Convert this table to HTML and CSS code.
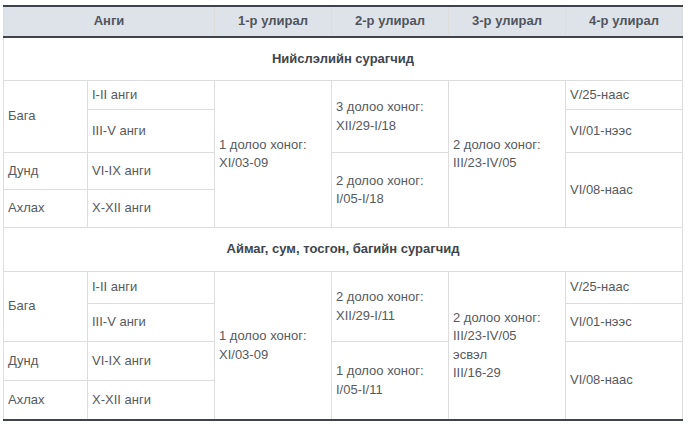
FILE: index.html
```html
<!DOCTYPE html>
<html>
<head>
<meta charset="utf-8">
<link rel="stylesheet" href="styles.css">
</head>
<body>
<table class="sched">
  <colgroup>
    <col class="c-level">
    <col class="c-grade">
    <col class="c-q">
    <col class="c-q">
    <col class="c-q">
    <col class="c-q">
  </colgroup>
  <thead>
    <tr class="head">
      <th colspan="2">Анги</th>
      <th>1-р улирал</th>
      <th>2-р улирал</th>
      <th>3-р улирал</th>
      <th>4-р улирал</th>
    </tr>
  </thead>
  <tbody>
    <tr class="sect"><td colspan="6">Нийслэлийн сурагчид</td></tr>
    <tr class="a1">
      <td rowspan="2" class="lv">Бага</td>
      <td class="gr">I-II анги</td>
      <td rowspan="4" class="q1">1 долоо хоног:<br>XI/03-09</td>
      <td rowspan="2" class="q2">3 долоо хоног:<br>XII/29-I/18</td>
      <td rowspan="4" class="q3">2 долоо хоног:<br>III/23-IV/05</td>
      <td class="q4">V/25-наас</td>
    </tr>
    <tr class="a2">
      <td class="gr">III-V анги</td>
      <td class="q4">VI/01-нээс</td>
    </tr>
    <tr class="a3">
      <td class="lv">Дунд</td>
      <td class="gr">VI-IX анги</td>
      <td rowspan="2" class="q2">2 долоо хоног:<br>I/05-I/18</td>
      <td rowspan="2" class="q4">VI/08-наас</td>
    </tr>
    <tr class="a4">
      <td class="lv">Ахлах</td>
      <td class="gr">X-XII анги</td>
    </tr>
    <tr class="sect sect2"><td colspan="6">Аймаг, сум, тосгон, багийн сурагчид</td></tr>
    <tr class="b1">
      <td rowspan="2" class="lv">Бага</td>
      <td class="gr">I-II анги</td>
      <td rowspan="4" class="q1">1 долоо хоног:<br>XI/03-09</td>
      <td rowspan="2" class="q2">2 долоо хоног:<br>XII/29-I/11</td>
      <td rowspan="4" class="q3 tall">2 долоо хоног:<br>III/23-IV/05<br>эсвэл<br>III/16-29</td>
      <td class="q4">V/25-наас</td>
    </tr>
    <tr class="b2">
      <td class="gr">III-V анги</td>
      <td class="q4">VI/01-нээс</td>
    </tr>
    <tr class="b3">
      <td class="lv">Дунд</td>
      <td class="gr">VI-IX анги</td>
      <td rowspan="2" class="q2">1 долоо хоног:<br>I/05-I/11</td>
      <td rowspan="2" class="q4">VI/08-наас</td>
    </tr>
    <tr class="b4">
      <td class="lv">Ахлах</td>
      <td class="gr">X-XII анги</td>
    </tr>
  </tbody>
</table>
</body>
</html>
```

FILE: styles.css
```css
html, body {
  margin: 0;
  padding: 0;
  background: #ffffff;
}

body {
  padding: 5px 0 0 3px;
  font-family: "Liberation Sans", Arial, sans-serif;
  font-size: 13px;
  color: #555a60;
}

.sched {
  border-collapse: collapse;
  table-layout: fixed;
  width: 679px;
  border-left: 1px solid #dddddd;
  border-right: 1px solid #dddddd;
  border-bottom: 2px solid #3f444c;
}

.c-level { width: 84px; }
.c-grade { width: 127px; }
.c-q { width: 117px; }

.sched th,
.sched td {
  border: 1px solid #dddddd;
  padding: 0 4px;
  line-height: 18.5px;
  vertical-align: middle;
  text-align: left;
}

.head th {
  background: #dee3ea;
  border-top: 2px solid #3f444c;
  border-bottom: 2px solid #3f444c;
  text-align: center;
  font-weight: bold;
  color: #50555c;
  height: 29px;
}

.sect td {
  text-align: center;
  font-weight: bold;
  color: #40454c;
  height: 42px;
}

.sect2 td { height: 43px; }

.lv { padding-left: 6px; }
.gr { padding-left: 4px; }
.q1 { padding-left: 2px; }
.q2 { padding-left: 2px; }
.q3 { padding-left: 5px; }
.q4 { padding-left: 3px; }

.tall { line-height: 20.5px; }

.a1 td { height: 28px; }
.a2 td { height: 42px; }
.a3 td { height: 36px; }
.a4 td { height: 37px; }

.b1 td { height: 31px; }
.b2 td { height: 37px; }
.b3 td { height: 38px; }
.b4 td { height: 38px; }
```
